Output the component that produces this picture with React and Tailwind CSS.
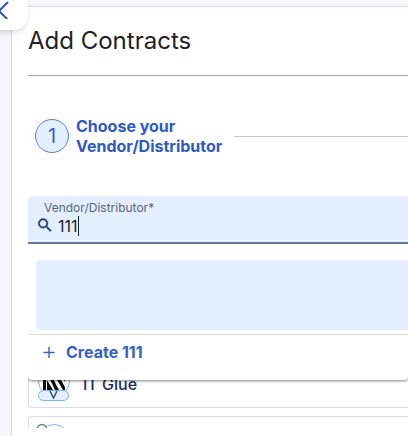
import React, { useState } from 'react';

const VendorLogo = () => (
  <svg width="34" height="38" viewBox="0 0 34 38" fill="none" aria-hidden="true">
    <circle cx="17" cy="16" r="15.5" fill="#fff" stroke="#7db2f5" />
    <path d="M6 8h3v17H6zM10 8h3l9 17h-4zM10 15l6 10h-6zM16 8h4l8 14v3h-2zM23 8h5v9z" fill="#0b0b0b" />
    <rect x="1.5" y="25.5" width="30" height="10" rx="5" fill="#e3efff" stroke="#7db2f5" />
    <path d="M13 26l3.5 7 3.5-7" stroke="#27407c" strokeWidth="1.4" />
  </svg>
);

const PartnerLogo = () => (
  <svg width="34" height="38" viewBox="0 0 34 38" fill="none" aria-hidden="true">
    <circle cx="17" cy="18" r="15.5" fill="#fff" stroke="#7db2f5" />
    <circle cx="5" cy="7" r="4.5" fill="#fff" stroke="#4f9a57" strokeWidth="1.5" />
  </svg>
);

const App = () => {
  const [query, setQuery] = useState('111');

  return (
    <div className="relative h-screen overflow-hidden bg-[#f4f6fa] pt-1.5 pl-[11px] font-['Inter',sans-serif]">
      {/* Collapse sidebar */}
      <button
        aria-label="Collapse sidebar"
        className="absolute -top-2.5 -left-5 z-10 flex h-10 w-12 items-center justify-center rounded-[14px] bg-white pr-2 text-[#2855c5] shadow-md"
      >
        <svg width="18" height="18" viewBox="0 0 18 18" fill="none" stroke="currentColor" strokeWidth="2" aria-hidden="true">
          <path d="M17 1L8 10l9 9" />
        </svg>
      </button>

      <main className="h-full border-t border-l border-[#d5dde5] bg-white pb-2 pl-4">
        <div className="h-full overflow-hidden">
          <h1 className="pt-4 text-2xl leading-9 text-[#1f2126]">Add Contracts</h1>
          <hr className="mt-4 border-t border-[#a4acbf]" />

          {/* Step */}
          <div className="mt-10 flex items-center pl-[7px]">
            <span className="flex h-[34px] w-[34px] shrink-0 items-center justify-center rounded-full border border-[#5b7fcb] bg-[#e3efff] text-xl text-[#3560c4]">
              1
            </span>
            <h2 className="ml-[7px] w-[150px] shrink-0 text-base leading-5 font-bold text-[#2d5ac4]">
              Choose your Vendor/Distributor
            </h2>
            <div className="ml-2 flex-1 border-t border-[#c6c6c6]" />
          </div>

          {/* Vendor search */}
          <div className="relative mt-10">
            <div className="h-12 rounded-tl border-b-2 border-[#61759b] bg-[#e3efff] pt-1">
              <label htmlFor="vendor" className="block pl-4 text-xs leading-4 text-[#5a6577]">
                Vendor/Distributor*
              </label>
              <div className="flex items-center pl-2">
                <svg width="18" height="18" viewBox="0 0 24 24" fill="#1d3b7c" stroke="#1d3b7c" strokeWidth="0.5" aria-hidden="true">
                  <path d="M15.5 13h-.79l-.28-.27A6.47 6.47 0 0 0 16 8.5 6.5 6.5 0 1 0 9.5 15c1.61 0 3.09-.59 4.23-1.57l.27.28v.79l5 4.99L20.49 18l-4.99-5zm-6 0C7.01 13 5 10.99 5 8.5S7.01 4 9.5 4 14 6.01 14 8.5 11.99 13 9.5 13z" />
                </svg>
                <div className="relative ml-1 flex-1">
                  <input
                    id="vendor"
                    value={query}
                    onChange={(e) => setQuery(e.target.value)}
                    className="block h-5 w-full bg-transparent text-base leading-5 text-[#1f2126] caret-transparent outline-none"
                  />
                  {/* Caret after the typed text */}
                  <div className="pointer-events-none absolute inset-y-0 left-0 flex">
                    <span className="invisible text-base leading-5">{query}</span>
                    <span className="w-px bg-[#1f2126]" />
                  </div>
                </div>
              </div>
            </div>

            {/* Options */}
            <div className="absolute top-full left-0 w-full rounded-b bg-white pt-4 shadow-[0_1px_3px_rgba(0,0,0,0.5)] [clip-path:inset(0_0_-8px_-4px)]">
              <div className="ml-2 h-[70px] rounded-l bg-[#e3efff]" />
              <button className="mt-1 flex h-[46px] w-full items-center border-t border-[#dedede] pb-3 pl-[15px] text-base font-bold text-[#3560c4]">
                <svg width="12" height="12" viewBox="0 0 12 12" stroke="currentColor" strokeWidth="1.4" aria-hidden="true">
                  <path d="M6 1v11M0.5 6.5h11" />
                </svg>
                <span className="ml-[11px]">Create {query}</span>
              </button>
            </div>
          </div>

          {/* Vendor list */}
          <ul className="mt-[115px] flex flex-col gap-2">
            <li className="flex h-[49px] items-center rounded-l border border-r-0 border-[#d9dde9] pl-2 text-base text-[#1b2f5c]">
              <VendorLogo />
              <span className="ml-3 font-medium">IT Glue</span>
            </li>
            <li className="flex h-[49px] items-center rounded-l border border-r-0 border-[#d9dde9] pl-2">
              <PartnerLogo />
            </li>
          </ul>
        </div>
      </main>
    </div>
  );
};

export default App;
